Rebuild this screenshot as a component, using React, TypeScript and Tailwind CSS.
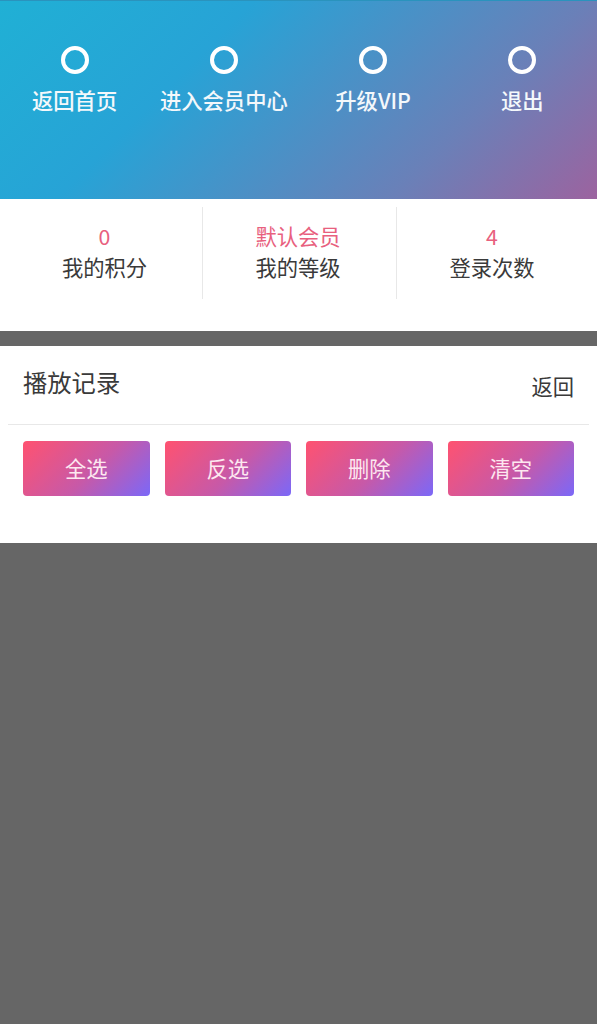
const navItems = ["返回首页", "进入会员中心", "升级VIP", "退出"];

const stats = [
  { value: "0", label: "我的积分" },
  { value: "默认会员", label: "我的等级" },
  { value: "4", label: "登录次数" },
];

const actions = ["全选", "反选", "删除", "清空"];

export default function App() {
  return (
    <div
      className="min-h-[1024px] bg-[#666666]"
      style={{ fontFamily: '"Noto Sans CJK SC", "Liberation Sans", sans-serif' }}
    >
      <div className="h-[199px] border-t border-[#2a93bd] bg-[linear-gradient(135deg,#20b0d5_0%,#27a3d6_32%,#6a80b8_74%,#9c639f_100%)] pt-[45px]">
        <div className="grid grid-cols-4">
          {navItems.map((item) => (
            <div key={item} className="flex flex-col items-center">
              <div className="h-[28px] w-[28px] rounded-full border-[4.5px] border-white" />
              <div className="mt-[11px] text-[21.3px] leading-[30px] font-medium whitespace-nowrap text-[#f4f8fb]">
                {item}
              </div>
            </div>
          ))}
        </div>
      </div>

      <div className="h-[132px] bg-white pt-[8px]">
        <div className="grid h-[92px] grid-cols-[203px_194px_200px]">
          <StatCell stat={stats[0]} className="border-r border-[#e8e8e8] pl-[7px]" />
          <StatCell stat={stats[1]} className="border-r border-[#e8e8e8] pr-[3px]" />
          <StatCell stat={stats[2]} className="pr-[10px]" />
        </div>
      </div>

      <div className="mt-[15px] h-[197px] bg-white">
        <div className="mx-[8px] flex h-[79px] justify-between border-b border-[#e8e8e8] px-[15px]">
          <div className="pt-[18px] text-[24.3px] leading-[36px] text-[#3a3a3a]">播放记录</div>
          <div className="pt-[25px] text-[21.3px] leading-[30px] text-[#3a3a3a]">返回</div>
        </div>
        <div className="mt-[16px] grid grid-cols-4 gap-[15px] px-[23px]">
          {actions.map((action) => (
            <button
              key={action}
              className="h-[55px] rounded-[4px] bg-[linear-gradient(135deg,#ff5270_0%,#c759a8_55%,#7b68f8_100%)] pb-[2px] text-[21.3px] text-[#fde8f0]"
            >
              {action}
            </button>
          ))}
        </div>
      </div>
    </div>
  );
}

function StatCell({ stat, className }: { stat: { value: string; label: string }; className: string }) {
  return (
    <div className={`flex flex-col items-center pt-[14px] ${className}`}>
      <div className="text-[21.3px] leading-[30px] text-[#e8607e]">{stat.value}</div>
      <div className="text-[21.3px] leading-[31px] text-[#3a3a3a]">{stat.label}</div>
    </div>
  );
}
